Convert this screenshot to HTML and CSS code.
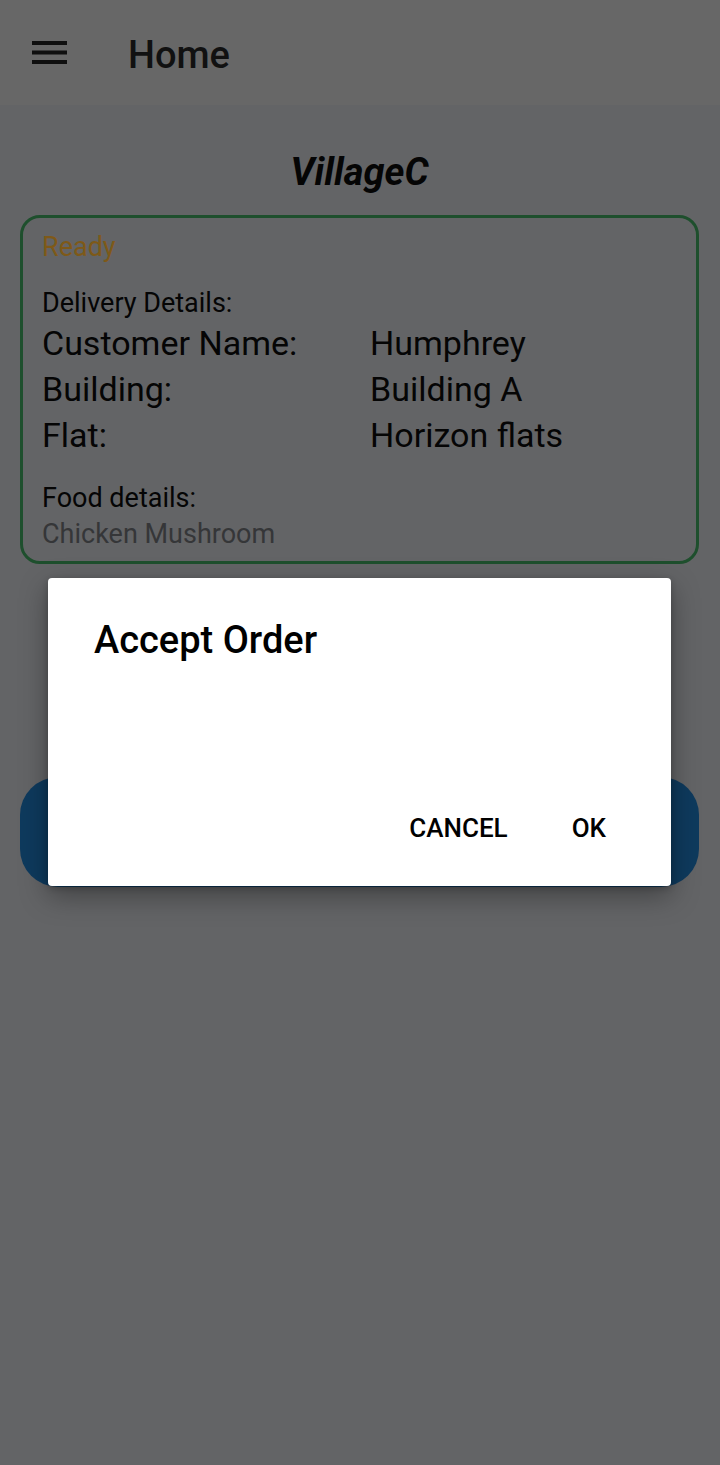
FILE: index.html
```
<!DOCTYPE html>
<html lang="en">
<head>
<meta charset="utf-8">
<title>Home</title>
<link rel="stylesheet" href="styles.css">
</head>
<body>
<div class="screen">
  <header class="appbar">
    <svg class="menu-icon" width="36" height="23" viewBox="0 0 36 23" aria-hidden="true">
      <rect x="0" y="0" width="35" height="4" fill="#0f0f0f"/>
      <rect x="0" y="9.5" width="35" height="4" fill="#0f0f0f"/>
      <rect x="0" y="19" width="35" height="4" fill="#0f0f0f"/>
    </svg>
    <h1 class="appbar-title">Home</h1>
  </header>

  <main class="content">
    <h2 class="village">VillageC</h2>

    <section class="order-card">
      <div class="status">Ready</div>
      <div class="section-label">Delivery Details:</div>
      <div class="details">
        <div class="key">Customer Name:</div><div class="val">Humphrey</div>
        <div class="key">Building:</div><div class="val">Building A</div>
        <div class="key">Flat:</div><div class="val">Horizon flats</div>
      </div>
      <div class="section-label food-label">Food details:</div>
      <div class="food">Chicken Mushroom</div>
    </section>

    <div class="action-btn"></div>
  </main>

  <div class="dialog" role="dialog">
    <div class="dialog-title">Accept Order</div>
    <div class="dialog-actions">
      <span class="dlg-btn">CANCEL</span>
      <span class="dlg-btn">OK</span>
    </div>
  </div>
</div>
</body>
</html>
```
FILE: styles.css
```
* { box-sizing: border-box; }
html, body {
  margin: 0;
  padding: 0;
  background: #636466;
  font-family: Roboto, "Noto Sans", "Liberation Sans", sans-serif;
  color: #000;
}
.screen {
  position: relative;
  width: 720px;
  height: 1465px;
  background: #636466;
  overflow: hidden;
}
.appbar {
  height: 105px;
  background: #676767;
  display: flex;
  align-items: center;
  padding-left: 32px;
}
.menu-icon { display: block; flex: none; }
.appbar-title {
  margin: 5px 0 0 60px;
  font-size: 38px;
  font-weight: 500;
  line-height: 44px;
  color: #111;
}
.content {
  display: flex;
  flex-direction: column;
  padding: 0 21px 0 20px;
}
.village {
  margin: 45px 0 0;
  text-align: center;
  font-size: 38px;
  line-height: 44px;
  font-weight: 700;
  font-style: italic;
  color: #050505;
}
.order-card {
  margin-top: 21px;
  border: 3px solid #1e4f2d;
  border-radius: 20px;
  padding: 13px 19px 12px;
  display: flex;
  flex-direction: column;
}
.status {
  font-size: 27px;
  line-height: 32px;
  color: #7e5918;
}
.section-label {
  margin-top: 25px;
  font-size: 27px;
  line-height: 30px;
  color: #050505;
}
.details {
  margin-top: 2px;
  display: grid;
  grid-template-columns: 328px 1fr;
  font-size: 34px;
  line-height: 46px;
  color: #050505;
}
.food-label {
  margin-top: 25px;
}
.food {
  margin-top: 6px;
  font-size: 27px;
  line-height: 30px;
  color: #353638;
}
.action-btn {
  margin-top: 213px;
  height: 110px;
  border-radius: 38px;
  background: #0e3a5d;
}
.dialog {
  position: absolute;
  left: 48px;
  top: 578px;
  width: 623px;
  height: 308px;
  background: #fff;
  border-radius: 4px;
  box-shadow: 0 10px 28px rgba(0, 0, 0, 0.35), 0 2px 6px rgba(0, 0, 0, 0.2);
  display: flex;
  flex-direction: column;
  justify-content: space-between;
  padding: 40px 65px 43px 46px;
}
.dialog-title {
  font-size: 38px;
  line-height: 44px;
  font-weight: 500;
  color: #000;
}
.dialog-actions {
  display: flex;
  justify-content: flex-end;
  gap: 64px;
}
.dlg-btn {
  font-size: 26px;
  line-height: 30px;
  font-weight: 500;
  letter-spacing: 0;
  color: #000;
}
```
